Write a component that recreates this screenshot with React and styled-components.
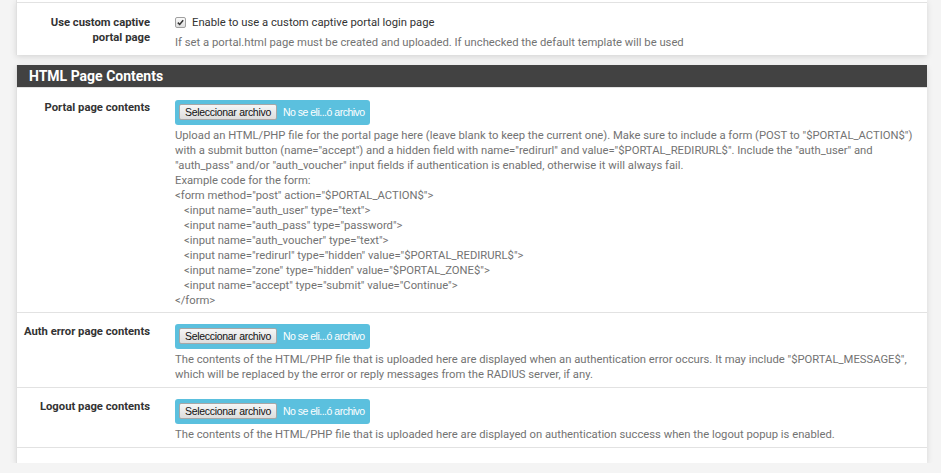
import React from 'react'
import styled, { createGlobalStyle } from 'styled-components'

const GlobalStyle = createGlobalStyle`
	html, body {
		margin: 0;
		padding: 0;
		background: #f4f4f4;
	}
	body {
		font-family: Roboto, "Liberation Sans", Arial, sans-serif;
		font-size: 11.25px;
		color: #333;
	}
`

const Page = styled.div`
	padding: 0 14px 0 16px;
`

const Panel = styled.div`
	background: #fff;
	border-left: 1px solid #e0e0e0;
	box-shadow: 0 2px 6px rgba(0, 0, 0, 0.12);
	margin-bottom: ${p => p.gap || 0}px;
	padding-top: ${p => p.top || 0}px;
	padding-bottom: ${p => p.bottom || 0}px;
`

const PanelHeading = styled.div`
	background: #424242;
	color: #fff;
	font-weight: 700;
	font-size: 14px;
	height: 22px;
	line-height: 22px;
	padding-left: 12px;
`

const Row = styled.div`
	display: grid;
	grid-template-columns: 158px 1fr;
	border-top: 1px solid #e2e2e2;
	border-bottom: ${p => (p.last ? '1px solid #e2e2e2' : 'none')};
	padding: ${p => p.pad || '11px 8px 5px 0'};
	&:first-of-type {
		border-top: ${p => (p.flush ? 'none' : '1px solid #e2e2e2')};
	}
`

const Label = styled.div`
	font-weight: 700;
	text-align: right;
	line-height: 15px;
	padding-right: 25px;
	color: #333;
`

const Content = styled.div`
	display: flex;
	flex-direction: column;
	align-items: flex-start;
`

const CheckLine = styled.label`
	display: flex;
	align-items: center;
	gap: 6px;
	line-height: 15px;
	color: #333;
`

const CheckBox = styled.span`
	width: 9px;
	height: 9px;
	border: 1px solid #a0a0a0;
	border-radius: 2px;
	background: linear-gradient(#fafafa, #dedede);
	display: flex;
	align-items: center;
	justify-content: center;
	svg {
		display: block;
	}
`

const Help = styled.div`
	color: #737373;
	line-height: 15px;
	margin-top: ${p => p.top || 3}px;
`

const CodeLine = styled.div`
	padding-left: ${p => (p.indent ? 9 : 0)}px;
`

const FileBox = styled.div`
	display: flex;
	align-items: center;
	gap: 6px;
	height: 25px;
	box-sizing: border-box;
	padding: 0 5px 2px 4px;
	background: #5bc0de;
	border-radius: 3px;
	font-family: "Liberation Sans", Arial, sans-serif;
	font-size: 10.5px;
	letter-spacing: -0.3px;
`

const FileButton = styled.span`
	display: inline-flex;
	align-items: center;
	height: 14px;
	padding: 0 5px;
	color: #111;
	background: linear-gradient(#f6f6f6, #dddddd);
	border: 1px solid #a7a7a7;
	border-radius: 2px;
`

const FileName = styled.span`
	color: #fff;
	letter-spacing: -0.5px;
`

const FileInput = () => (
	<FileBox>
		<FileButton>Seleccionar archivo</FileButton>
		<FileName>No se eli...ó archivo</FileName>
	</FileBox>
)

const code = [
	['<form method="post" action="$PORTAL_ACTION$">', false],
	['<input name="auth_user" type="text">', true],
	['<input name="auth_pass" type="password">', true],
	['<input name="auth_voucher" type="text">', true],
	['<input name="redirurl" type="hidden" value="$PORTAL_REDIRURL$">', true],
	['<input name="zone" type="hidden" value="$PORTAL_ZONE$">', true],
	['<input name="accept" type="submit" value="Continue">', true],
	['</form>', false],
]

const App = () => {
	return (
		<Page>
			<GlobalStyle />
			<Panel top={2} gap={10}>
				<Row pad="12px 8px 5px 0">
					<Label>Use custom captive<br />portal page</Label>
					<Content>
						<CheckLine>
							<CheckBox>
								<svg width="7" height="7" viewBox="0 0 7 7">
									<path d="M0.8 3.6 L2.7 5.5 L6.2 1.2" fill="none" stroke="#333" strokeWidth="1.5" />
								</svg>
							</CheckBox>
							Enable to use a custom captive portal login page
						</CheckLine>
						<Help top={5}>If set a portal.html page must be created and uploaded. If unchecked the default template will be used</Help>
					</Content>
				</Row>
			</Panel>

			<Panel bottom={15}>
				<PanelHeading>HTML Page Contents</PanelHeading>
				<Row flush pad="12px 8px 4px 0">
					<Label>Portal page contents</Label>
					<Content>
						<FileInput />
						<Help>
							Upload an HTML/PHP file for the portal page here (leave blank to keep the current one). Make sure to include a form (POST to "$PORTAL_ACTION$") with a submit button (name="accept") and a hidden field with name="redirurl" and value="$PORTAL_REDIRURL$". Include the "auth_user" and "auth_pass" and/or "auth_voucher" input fields if authentication is enabled, otherwise it will always fail.
							<br />
							Example code for the form:
							{code.map(([line, indent], i) => (
								<CodeLine key={i} indent={indent}>{line}</CodeLine>
							))}
						</Help>
					</Content>
				</Row>
				<Row>
					<Label>Auth error page contents</Label>
					<Content>
						<FileInput />
						<Help>
							The contents of the HTML/PHP file that is uploaded here are displayed when an authentication error occurs. It may include "$PORTAL_MESSAGE$", which will be replaced by the error or reply messages from the RADIUS server, if any.
						</Help>
					</Content>
				</Row>
				<Row last>
					<Label>Logout page contents</Label>
					<Content>
						<FileInput />
						<Help>
							The contents of the HTML/PHP file that is uploaded here are displayed on authentication success when the logout popup is enabled.
						</Help>
					</Content>
				</Row>
			</Panel>
		</Page>
	)
}

export default App
